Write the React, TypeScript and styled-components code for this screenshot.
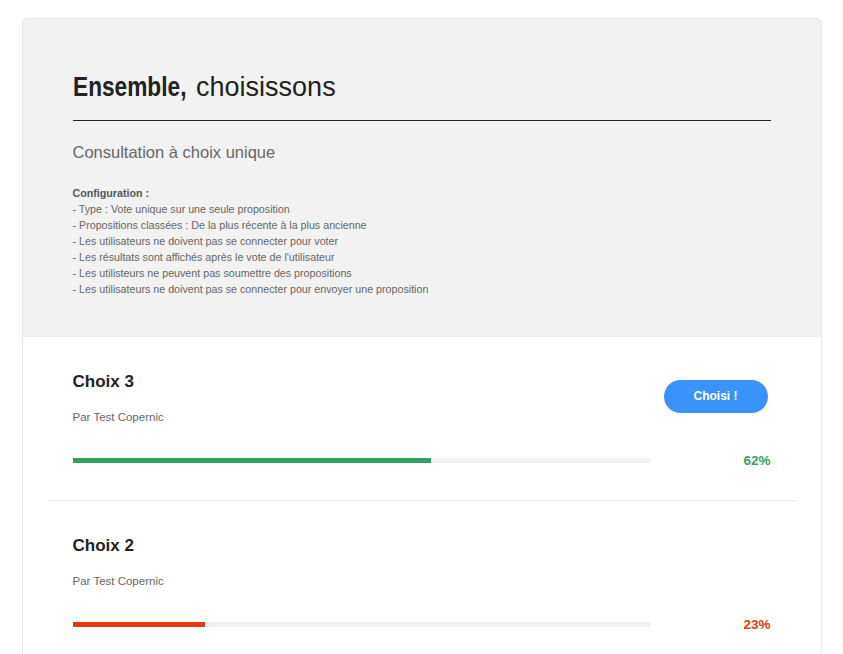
import React from "react";
import styled, { createGlobalStyle } from "styled-components";

const GlobalStyle = createGlobalStyle`
  html, body {
    margin: 0;
    padding: 0;
    background: #ffffff;
    overflow: hidden;
  }
  body {
    font-family: "Liberation Sans", Arial, sans-serif;
    color: #222222;
  }
`;

const Page = styled.div`
  padding-top: 18px;
`;

const Card = styled.div`
  width: 800px;
  margin: 0 auto;
  box-sizing: border-box;
  border: 1px solid #e6e6e6;
  border-radius: 5px;
  overflow: hidden;
  background: #ffffff;
`;

const Header = styled.div`
  background: #f2f2f2;
  padding: 52px 50px 40px 50px;
`;

const Title = styled.h1`
  margin: 0;
  padding-bottom: 17px;
  border-bottom: 1px solid #222222;
  font-size: 27px;
  line-height: 32px;
  font-weight: 400;
  color: #222222;
`;

/* condensed bold lead word */
const Lead = styled.span`
  display: inline-block;
  font-weight: 700;
  transform: scaleX(0.84);
  transform-origin: left center;
  margin-right: -19px;
`;

const Subtitle = styled.h2`
  margin: 21px 0 0;
  font-size: 16.5px;
  line-height: 20px;
  font-weight: 400;
  color: #666666;
`;

const Config = styled.div`
  margin-top: 23px;
  font-size: 10.7px;
  line-height: 16px;
  color: #666666;

  strong {
    color: #555555;
    font-weight: 700;
  }
`;

const Choices = styled.div`
  padding: 0 25px;
`;

const Choice = styled.div`
  padding: 35px 25px 32px;
  border-top: 1px solid #e8e8e8;

  &:first-child {
    border-top: none;
  }
`;

const TopRow = styled.div`
  display: flex;
  align-items: center;
  justify-content: space-between;
`;

const Info = styled.div`
  display: flex;
  flex-direction: column;
  gap: 18px;
`;

const ChoiceTitle = styled.h3`
  margin: 0;
  font-size: 17px;
  line-height: 20px;
  font-weight: 700;
  color: #222222;
`;

const Author = styled.div`
  font-size: 11.5px;
  line-height: 14px;
  color: #666666;
`;

const Side = styled.div`
  width: 110px;
  display: flex;
  justify-content: center;
`;

const ChooseButton = styled.button`
  width: 104px;
  height: 33px;
  margin-bottom: 4px;
  border: none;
  border-radius: 17px;
  background: #3a93fb;
  color: #ffffff;
  font-family: "Liberation Sans", Arial, sans-serif;
  font-size: 12px;
  font-weight: 700;
  cursor: pointer;
`;

const BottomRow = styled.div`
  margin-top: 29px;
  display: flex;
  align-items: center;
  gap: 10px;
`;

const Track = styled.div`
  flex: 1;
  height: 5px;
  background: #f2f2f2;
`;

const Fill = styled.div<{ $color: string }>`
  height: 100%;
  background: ${(p) => p.$color};
`;

const Percent = styled.div<{ $color: string }>`
  width: 110px;
  text-align: right;
  font-size: 13.5px;
  font-weight: 700;
  color: ${(p) => p.$color};
`;

const configLines = [
  "- Type : Vote unique sur une seule proposition",
  "- Propositions classées : De la plus récente à la plus ancienne",
  "- Les utilisateurs ne doivent pas se connecter pour voter",
  "- Les résultats sont affichés après le vote de l'utilisateur",
  "- Les utilisteurs ne peuvent pas soumettre des propositions",
  "- Les utilisateurs ne doivent pas se connecter pour envoyer une proposition",
];

const choices = [
  { title: "Choix 3", author: "Par Test Copernic", percent: 62, color: "#2ea25a", button: true },
  { title: "Choix 2", author: "Par Test Copernic", percent: 23, color: "#e8380d", button: false },
];

const App = () => {
  return (
    <Page>
      <GlobalStyle />
      <Card>
        <Header>
          <Title>
            <Lead>Ensemble,</Lead> choisissons
          </Title>
          <Subtitle>Consultation à choix unique</Subtitle>
          <Config>
            <strong>Configuration :</strong>
            {configLines.map((line) => (
              <div key={line}>{line}</div>
            ))}
          </Config>
        </Header>
        <Choices>
          {choices.map((c) => (
            <Choice key={c.title}>
              <TopRow>
                <Info>
                  <ChoiceTitle>{c.title}</ChoiceTitle>
                  <Author>{c.author}</Author>
                </Info>
                <Side>{c.button && <ChooseButton>Choisi !</ChooseButton>}</Side>
              </TopRow>
              <BottomRow>
                <Track>
                  <Fill $color={c.color} style={{ width: `${c.percent}%` }} />
                </Track>
                <Percent $color={c.color}>{c.percent}%</Percent>
              </BottomRow>
            </Choice>
          ))}
        </Choices>
      </Card>
    </Page>
  );
};

export default App;
